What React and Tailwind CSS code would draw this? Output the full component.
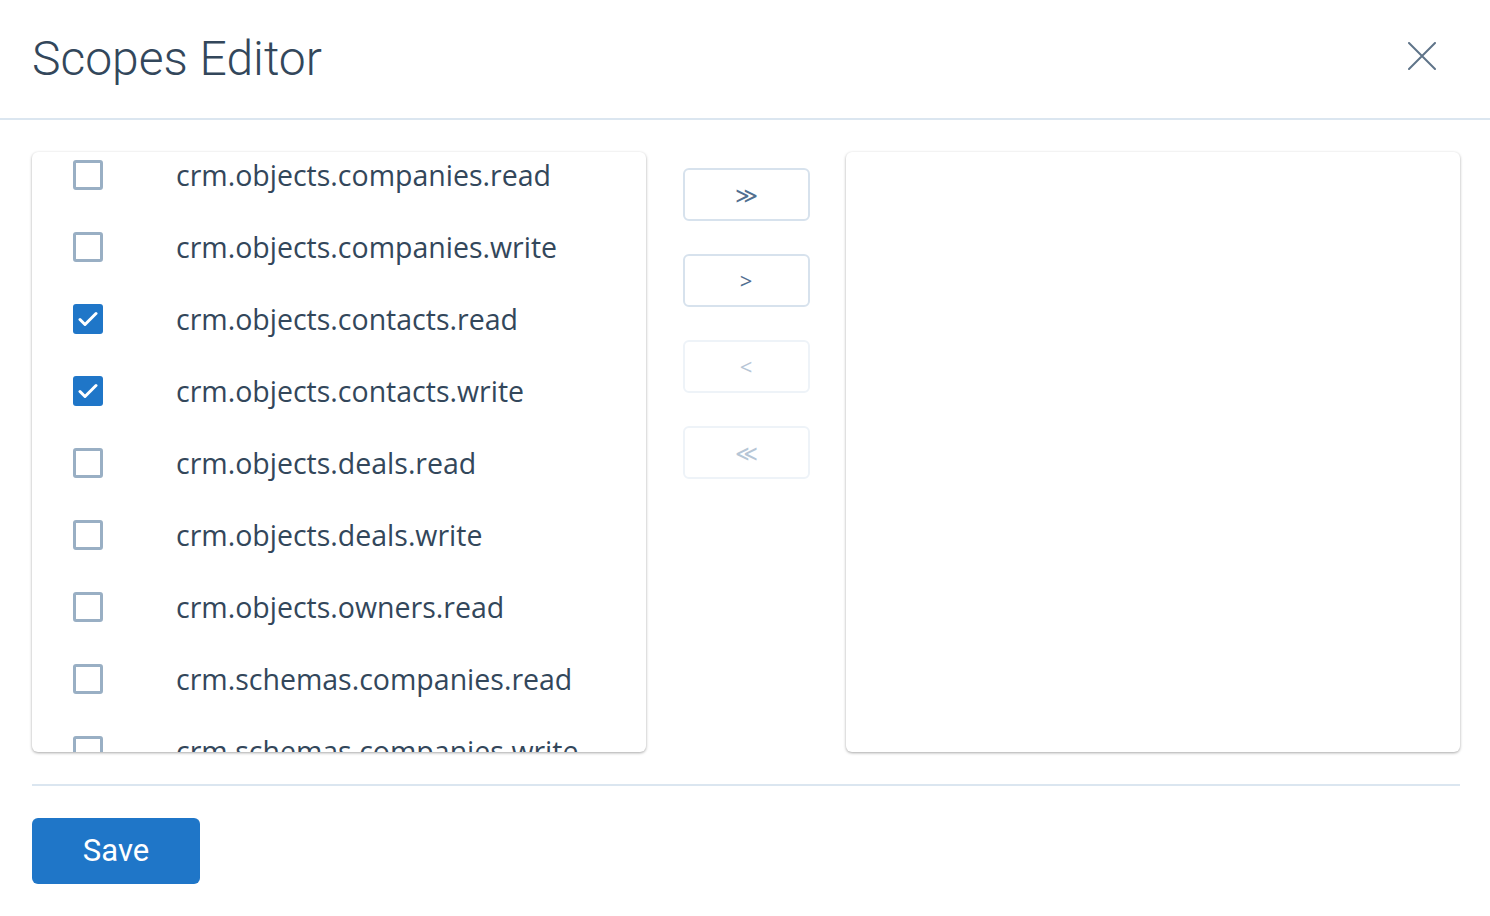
const scopes = [
  { name: 'crm.objects.companies.read', checked: false },
  { name: 'crm.objects.companies.write', checked: false },
  { name: 'crm.objects.contacts.read', checked: true },
  { name: 'crm.objects.contacts.write', checked: true },
  { name: 'crm.objects.deals.read', checked: false },
  { name: 'crm.objects.deals.write', checked: false },
  { name: 'crm.objects.owners.read', checked: false },
  { name: 'crm.schemas.companies.read', checked: false },
  { name: 'crm.schemas.companies.write', checked: false },
]

function Checkbox({ checked }) {
  if (checked) {
    return (
      <span className="flex h-[30px] w-[30px] items-center justify-center rounded-[3px] bg-[#1f76c8]">
        <svg width="20" height="16" viewBox="0 0 20 16" fill="none">
          <path d="M2 8.5l5 5L18 2.5" stroke="white" strokeWidth="3" strokeLinecap="round" strokeLinejoin="round" />
        </svg>
      </span>
    )
  }
  return <span className="block h-[30px] w-[30px] rounded-[3px] border-[3px] border-[#99afc4] bg-white" />
}

function MoveButton({ label, disabled }) {
  return (
    <button
      className={
        disabled
          ? 'flex h-[53px] w-[127px] items-center justify-center rounded-[6px] border-2 border-[#eef3f8] bg-white text-[22px] text-[#b6c6d6]'
          : 'flex h-[53px] w-[127px] items-center justify-center rounded-[6px] border-2 border-[#d7e2ed] bg-white text-[22px] text-[#516f90]'
      }
    >
      {label}
    </button>
  )
}

export default function App() {
  return (
    <div className="min-h-screen bg-white text-[#33475b]" style={{ fontFamily: '"Open Sans", sans-serif' }}>
      <header className="flex h-[120px] items-center justify-between border-b-2 border-[#dbe6f0] pl-8 pr-[54px]">
        <h1 className="-mt-[1px] text-[48px] font-light leading-none text-[#33475b]" style={{ fontFamily: 'Roboto, sans-serif' }}>
          Scopes Editor
        </h1>
        <button className="-mt-[6px] text-[#5f7489]">
          <svg width="28" height="28" viewBox="0 0 28 28" fill="none">
            <path d="M1 1L27 27M27 1L1 27" stroke="currentColor" strokeWidth="2" strokeLinecap="round" />
          </svg>
        </button>
      </header>

      <div className="pl-8 pr-[30px] pt-8">
        <div className="flex items-start">
          <div className="h-[600px] w-[614px] overflow-hidden rounded-[6px] bg-white shadow-[0_1px_3px_rgba(0,0,0,0.35)]">
            <div className="-mt-[13px]">
              {scopes.map((s) => (
                <div key={s.name} className="flex h-[72px] items-center">
                  <div className="ml-[41px] w-[103px]">
                    <Checkbox checked={s.checked} />
                  </div>
                  <span className="whitespace-nowrap text-[28.5px]">{s.name}</span>
                </div>
              ))}
            </div>
          </div>

          <div className="flex w-[200px] flex-col items-center gap-[33px] pt-[16px]">
            <MoveButton label="≫" />
            <MoveButton label=">" />
            <MoveButton label="<" disabled />
            <MoveButton label="≪" disabled />
          </div>

          <div className="h-[600px] w-[614px] rounded-[6px] bg-white shadow-[0_1px_3px_rgba(0,0,0,0.35)]" />
        </div>

        <div className="mt-8 border-t-2 border-[#dbe6f0]" />

        <button
          className="mt-8 h-[66px] w-[168px] rounded-[6px] bg-[#1f76c8] text-[31px] text-white"
          style={{ fontFamily: 'Roboto, sans-serif' }}
        >
          Save
        </button>
      </div>
    </div>
  )
}
